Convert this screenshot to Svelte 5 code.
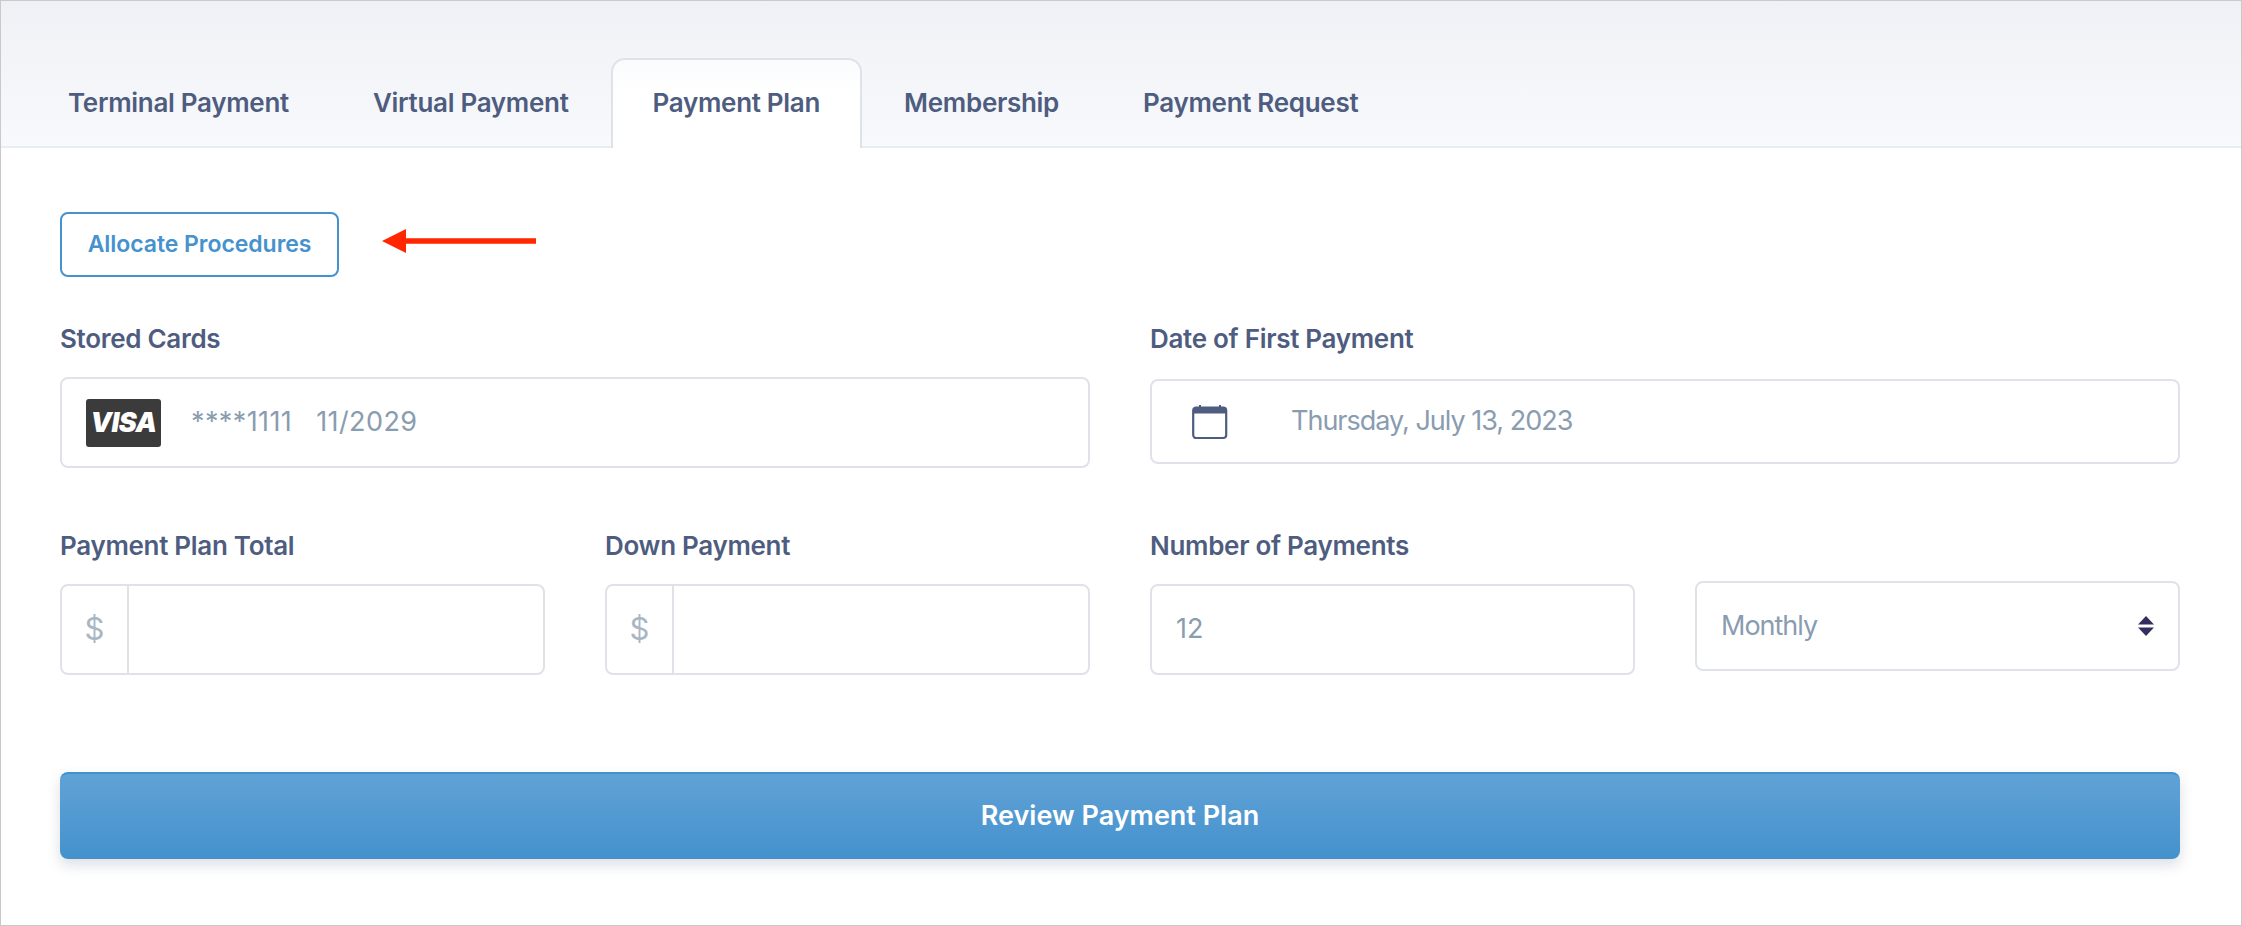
<script>
  const tabs = ['Terminal Payment', 'Virtual Payment', 'Payment Plan', 'Membership', 'Payment Request'];
  let active = 'Payment Plan';
  let stored = '****1111   11/2029';
  let firstDate = 'Thursday, July 13, 2023';
</script>

<div class="page">
  <nav class="tabs">
    {#each tabs as tab}
      <button class="tab" class:active={tab === active} onclick={() => (active = tab)}>{tab}</button>
    {/each}
  </nav>

  <form class="panel" onsubmit={(e) => e.preventDefault()}>
    <div class="allocate-row">
      <button type="button" class="allocate">Allocate Procedures</button>
      <svg class="arrow" width="154" height="24" viewBox="0 0 154 24">
        <path d="M0 12 L24 0 V9.300 H154 V14.700 H24 V24 Z" fill="#ff2600" />
      </svg>
    </div>

    <div class="columns top">
      <div class="field">
        <span class="label">Stored Cards</span>
        <div class="box card">
          <span class="visa">VISA</span>
          <span class="value stored">{stored}</span>
        </div>
      </div>
      <div class="field">
        <span class="label">Date of First Payment</span>
        <div class="box date">
          <svg class="calendar" width="36" height="36" viewBox="0 0 36 36">
            <path d="M8 1v4M28 1v4" stroke="#4e5d7f" stroke-width="2" />
            <rect x="1.200" y="3.500" width="33" height="30.500" rx="3" fill="#fff" stroke="#4e5d7f" stroke-width="2.200" />
            <path d="M1.200 6.500a3 3 0 0 1 3-3h27a3 3 0 0 1 3 3v3h-33z" fill="#4e5d7f" />
          </svg>
          <span class="value">{firstDate}</span>
        </div>
      </div>
    </div>

    <div class="columns bottom">
      <div class="pair">
        <div class="field">
          <span class="label">Payment Plan Total</span>
          <div class="box money">
            <span class="prefix">$</span>
          </div>
        </div>
        <div class="field">
          <span class="label">Down Payment</span>
          <div class="box money">
            <span class="prefix">$</span>
          </div>
        </div>
      </div>
      <div class="pair">
        <div class="field">
          <span class="label">Number of Payments</span>
          <div class="box count">
            <span class="value number">12</span>
          </div>
        </div>
        <div class="box select">
          <span class="value">Monthly</span>
          <svg width="16" height="20" viewBox="0 0 16 20">
            <path d="M8 0 L16 8.500 H0 Z M0 11.500 H16 L8 20 Z" fill="#322f5e" />
          </svg>
        </div>
      </div>
    </div>

    <button type="submit" class="review">Review Payment Plan</button>
  </form>
</div>

<style>
  :global(body) {
    margin: 0;
    background: #fff;
  }

  .page {
    box-sizing: border-box;
    width: 2242px;
    height: 926px;
    border: 1px solid #c9c9c9;
    font-family: Inter, 'Liberation Sans', sans-serif;
    color: #4e5d7f;
    background: #fff;
  }

  .tabs {
    display: flex;
    align-items: flex-end;
    box-sizing: border-box;
    height: 147px;
    padding-left: 25px;
    background: linear-gradient(#eff1f6, #f8f9fc);
    border-bottom: 2px solid #e9ecf1;
  }

  .tab {
    height: 90px;
    padding: 0 40px 3px;
    margin: 0 0 -2px;
    border: 2px solid transparent;
    border-bottom: 0;
    border-radius: 14px 14px 0 0;
    background: none;
    font: 600 26px Inter, 'Liberation Sans', sans-serif;
    letter-spacing: -0.3px;
    color: #4e5d7f;
  }

  .tab.active {
    border-color: #dfe3e9;
    background: linear-gradient(#fafbfd, #fff 40%);
  }

  .panel {
    padding: 64px 59px 0;
  }

  .allocate-row {
    display: flex;
    align-items: center;
    gap: 43px;
  }

  .allocate {
    box-sizing: border-box;
    width: 279px;
    height: 65px;
    padding: 0 0 2px;
    border: 2px solid #4592cf;
    border-radius: 8px;
    background: #fff;
    color: #4592cf;
    font: 600 23px Inter, 'Liberation Sans', sans-serif;
    letter-spacing: -0.05px;
  }

  .arrow {
    margin-top: -7px;
  }

  .columns {
    display: grid;
    grid-template-columns: 1030px 1030px;
    gap: 60px;
  }

  .columns.top {
    margin-top: 47px;
  }

  .columns.bottom {
    margin-top: 63px;
  }

  .pair {
    display: grid;
    grid-template-columns: 485px 485px;
    gap: 60px;
    align-items: end;
  }

  .field {
    display: flex;
    flex-direction: column;
  }

  .label {
    height: 30px;
    margin-bottom: 23px;
    font-size: 26px;
    font-weight: 600;
    line-height: 30px;
    letter-spacing: -0.3px;
  }

  .box {
    display: flex;
    align-items: center;
    box-sizing: border-box;
    border: 2px solid #dfe3e9;
    border-radius: 8px;
    background: #fff;
  }

  .value {
    padding-bottom: 2px;
    font-size: 27px;
    letter-spacing: -1px;
    color: #8a9cb0;
    white-space: pre;
  }

  .value.stored {
    letter-spacing: 0.4px;
  }

  .value.number {
    letter-spacing: 0;
  }

  .card {
    height: 91px;
    padding-left: 24px;
  }

  .visa {
    display: flex;
    align-items: center;
    justify-content: center;
    width: 75px;
    height: 48px;
    margin-right: 30px;
    border-radius: 3px;
    background: #3b3b3b;
    color: #fff;
    font-size: 27px;
    font-style: italic;
    font-weight: 900;
    letter-spacing: -0.5px;
  }

  .date {
    height: 85px;
    margin-top: 2px;
    padding-left: 40px;
  }

  .calendar {
    margin-right: 63px;
  }

  .money {
    height: 91px;
  }

  .prefix {
    display: flex;
    align-items: center;
    justify-content: center;
    box-sizing: border-box;
    width: 67px;
    height: 100%;
    padding-bottom: 2px;
    border-right: 2px solid #dfe3e9;
    color: #a9b6c4;
    font-size: 31px;
  }

  .count {
    height: 91px;
    padding-left: 24px;
  }

  .select {
    justify-content: space-between;
    height: 90px;
    padding: 0 24px;
    margin-bottom: 4px;
  }

  .review {
    display: block;
    box-sizing: border-box;
    width: 2120px;
    height: 87px;
    margin-top: 97px;
    padding: 0 0 3px;
    border: 0;
    border-top: 2px solid #4291cd;
    border-radius: 8px;
    background: linear-gradient(#60a2d6, #4491cd);
    box-shadow: 0 6px 14px rgba(60, 70, 100, 0.18);
    color: #fff;
    font: 600 27px Inter, 'Liberation Sans', sans-serif;
  }
</style>
